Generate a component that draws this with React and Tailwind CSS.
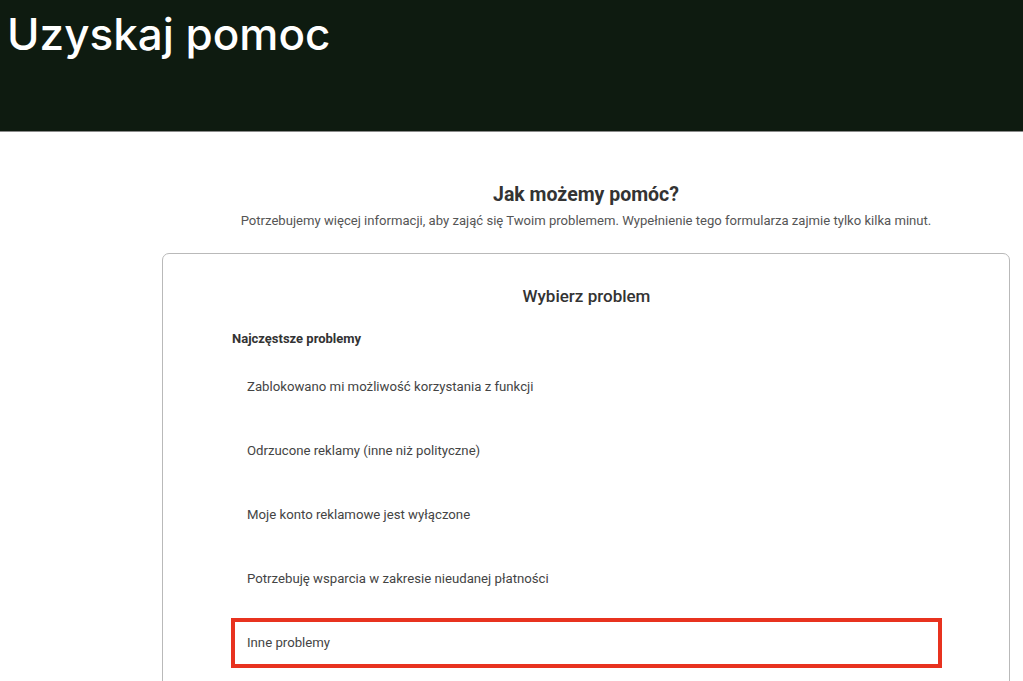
import React from 'react'

const items = [
  'Zablokowano mi możliwość korzystania z funkcji',
  'Odrzucone reklamy (inne niż polityczne)',
  'Moje konto reklamowe jest wyłączone',
  'Potrzebuję wsparcia w zakresie nieudanej płatności',
  'Inne problemy',
]

export default function App() {
  return (
    <div className="min-h-[681px] bg-white overflow-hidden" style={{fontFamily: 'Roboto, "Liberation Sans", sans-serif'}}>
      <header className="h-[132px] bg-[#0e1b10] border-b border-[#8a8a8a]">
        <h1 className="pl-[7px] pt-[4px] text-white text-[44px] font-medium leading-[60px]" style={{fontFamily: 'Inter, "Open Sans", sans-serif'}}>
          Uzyskaj pomoc
        </h1>
      </header>

      <main className="ml-[162px] w-[848px] pt-[51px]">
        <h2 className="text-center text-[19.5px] font-bold text-[#333] leading-[24px]">Jak możemy pomóc?</h2>
        <p className="mt-[5px] text-center text-[13.1px] text-[#555] leading-[18px]">
          Potrzebujemy więcej informacji, aby zająć się Twoim problemem. Wypełnienie tego formularza zajmie tylko kilka minut.
        </p>

        <section className="mt-[23px] border border-[#b9b9b9] rounded-[7px] pl-[68px] pr-[67px] pt-[30px] pb-[20px]">
          <h3 className="text-center text-[17px] font-medium text-[#333] leading-[24px]">Wybierz problem</h3>
          <p className="mt-[22px] text-[13px] font-bold text-[#333] leading-[18px] pl-[1px]">Najczęstsze problemy</p>
          <ul className="mt-[14px] flex flex-col gap-[14px]">
            {items.map((t, i) => (
              <li
                key={t}
                className={`h-[50px] flex items-center text-[13.2px] text-[#444] ${i === items.length - 1 ? 'border-[4px] border-[#e8321f] pl-[12px]' : 'pl-[16px]'}`}
              >
                {t}
              </li>
            ))}
          </ul>
        </section>
      </main>
    </div>
  )
}
